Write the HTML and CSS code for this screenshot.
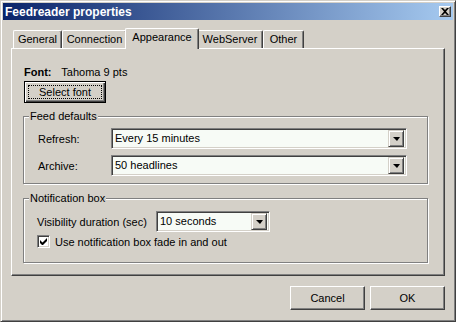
FILE: index.html
```html
<!DOCTYPE html>
<html lang="en">

<head>
    <meta charset="UTF-8">
    <title>Feedreader properties</title>
    <link rel="stylesheet" href="styles.css">
</head>

<body>
    <div class="window">
        <div class="titlebar">
            <span class="title">Feedreader properties</span>
            <span class="close">
                <svg width="8" height="7" viewBox="0 0 8 7"><path d="M0 0h2l2 2 2-2h2L5 3.5 8 7H6L4 5 2 7H0l3-3.5z" fill="#000"/></svg>
            </span>
        </div>

        <div class="content">
            <div class="tabs">
                <div class="tab t-general">General</div>
                <div class="tab t-connection">Connection</div>
                <div class="tab t-appearance active">Appearance</div>
                <div class="tab t-webserver">WebServer</div>
                <div class="tab t-other">Other</div>
            </div>

            <div class="panel">
                <div class="font-row">
                    <span class="font-label">Font:</span>
                    <span class="font-value">Tahoma 9 pts</span>
                </div>
                <button class="btn btn-default"><span class="focus">Select font</span></button>

                <fieldset class="group group-feed">
                    <legend>Feed defaults</legend>
                    <div class="row">
                        <span class="label">Refresh:</span>
                        <div class="combo combo-wide">
                            <span class="value">Every 15 minutes</span>
                            <span class="arrow"><i></i></span>
                        </div>
                    </div>
                    <div class="row">
                        <span class="label">Archive:</span>
                        <div class="combo combo-wide">
                            <span class="value">50 headlines</span>
                            <span class="arrow"><i></i></span>
                        </div>
                    </div>
                </fieldset>

                <fieldset class="group group-notify">
                    <legend>Notification box</legend>
                    <div class="row">
                        <span class="label label-long">Visibility duration (sec)</span>
                        <div class="combo combo-small">
                            <span class="value">10 seconds</span>
                            <span class="arrow"><i></i></span>
                        </div>
                    </div>
                    <div class="check-row">
                        <span class="checkbox">
                            <svg width="7" height="7" viewBox="0 0 7 7"><path d="M0 2v3l2 2h1l4-4V0L2.5 4.5z" fill="#000"/></svg>
                        </span>
                        <span>Use notification box fade in and out</span>
                    </div>
                </fieldset>
            </div>

            <div class="footer">
                <button class="btn btn-footer">Cancel</button>
                <button class="btn btn-footer">OK</button>
            </div>
        </div>
    </div>
</body>

</html>
```

FILE: styles.css
```css
* {
    box-sizing: border-box;
}

body {
    margin: 0;
    background-color: #d4d0c8;
    font-family: "Liberation Sans", Arial, sans-serif;
    font-size: 11px;
    color: #000;
}

.window {
    width: 456px;
    height: 322px;
    background-color: #d4d0c8;
    border-top: 1px solid #d4d0c8;
    border-left: 1px solid #d4d0c8;
    border-right: 1px solid #404040;
    border-bottom: 1px solid #404040;
    box-shadow: inset 1px 1px #fff, inset -1px -1px #808080;
    padding: 2px;
    display: flex;
    flex-direction: column;
}

.titlebar {
    height: 17px;
    background: linear-gradient(to right, #0a246a, #a6caf0);
    display: flex;
    align-items: center;
    justify-content: space-between;
    padding: 0 2px 0 2px;
}

.title {
    color: #fff;
    font-weight: bold;
    font-size: 12px;
}

.close {
    width: 12px;
    height: 11px;
    background-color: #d4d0c8;
    border-top: 1px solid #fff;
    border-left: 1px solid #fff;
    border-right: 1px solid #404040;
    border-bottom: 1px solid #404040;
    box-shadow: inset -1px -1px #808080;
    display: flex;
    align-items: center;
    justify-content: center;
    padding: 0 1px 1px 0;
}

.close svg {
    display: block;
}

.content {
    padding: 0 8px;
}

/* tab strip */
.tabs {
    display: flex;
    align-items: flex-end;
    height: 28px;
    padding-left: 2px;
}

.tab {
    height: 18px;
    line-height: 16px;
    text-align: center;
    border-top: 1px solid #fff;
    border-left: 1px solid #fff;
    border-right: 1px solid #404040;
    box-shadow: inset -1px 0 #808080;
    border-radius: 2px 2px 0 0;
    background-color: #d4d0c8;
    position: relative;
}

.t-general { width: 49px; }
.t-connection { width: 65px; }
.t-appearance { width: 72px; }
.t-webserver { width: 66px; }
.t-other { width: 41px; }

.tab.active {
    height: 21px;
    margin-bottom: -1px;
    line-height: 17px;
    margin-left: -2px;
    margin-right: -2px;
    width: 74px;
    z-index: 1;
}

.panel {
    height: 228px;
    border-top: 1px solid #fff;
    border-left: 1px solid #fff;
    border-right: 1px solid #404040;
    border-bottom: 1px solid #404040;
    box-shadow: inset -1px -1px #808080;
    padding: 17px 0 0 12px;
}

.font-row {
    height: 13px;
    line-height: 13px;
}

.font-label {
    font-weight: bold;
    margin-right: 7px;
}

/* buttons */
.btn {
    font-family: inherit;
    font-size: 11px;
    color: #000;
    background-color: #d4d0c8;
    border-top: 1px solid #fff;
    border-left: 1px solid #fff;
    border-right: 1px solid #404040;
    border-bottom: 1px solid #404040;
    box-shadow: inset -1px -1px #808080;
    padding: 0;
    margin: 0;
}

.btn-default {
    display: block;
    margin-top: 2px;
    width: 82px;
    height: 22px;
    border: 1px solid #000;
    box-shadow: inset 1px 1px #fff, inset -1px -1px #404040, inset -2px -2px #808080;
    padding: 3px;
}

.btn-default .focus {
    display: block;
    height: 14px;
    line-height: 12px;
    border: 1px dotted #000;
}

.btn-footer {
    width: 75px;
    height: 24px;
    margin-left: 5px;
}

.footer {
    display: flex;
    justify-content: flex-end;
    padding-top: 10px;
    padding-right: 0;
}

/* group boxes */
.group {
    margin: 7px 0 0 -1px;
    width: 405px;
    min-width: 0;
    border: 1px solid #808080;
    box-shadow: 1px 1px #fff, inset 1px 1px #fff;
    padding: 5px 20px 7px 14px;
}

.group legend {
    padding: 0 1px;
    margin-left: -9px;
    line-height: 13px;
    background-color: #d4d0c8;
}

.group-notify {
    margin-top: 8px;
    padding: 6px 20px 14px 13px;
}

.group-notify legend {
    margin-left: -8px;
}

.row {
    display: flex;
    align-items: center;
    height: 21px;
}

.row + .row {
    margin-top: 6px;
}

.label {
    width: 73px;
}

.label-long {
    width: 119px;
}

.combo {
    height: 21px;
    display: flex;
    align-items: center;
    background-color: #f7fbf6;
    border-top: 1px solid #808080;
    border-left: 1px solid #808080;
    border-right: 1px solid #fff;
    border-bottom: 1px solid #fff;
    box-shadow: inset 1px 1px #404040, inset -1px -1px #d4d0c8;
    padding: 2px;
}

.combo-wide {
    flex: 1;
}

.combo-small {
    width: 114px;
}

.combo .value {
    flex: 1;
    padding-left: 1px;
    line-height: 17px;
}

.arrow {
    width: 16px;
    height: 17px;
    background-color: #d4d0c8;
    border-top: 1px solid #d4d0c8;
    border-left: 1px solid #d4d0c8;
    border-right: 1px solid #404040;
    border-bottom: 1px solid #404040;
    box-shadow: inset 1px 1px #fff, inset -1px -1px #808080;
    display: flex;
    align-items: center;
    justify-content: center;
}

.arrow i {
    display: block;
    width: 0;
    height: 0;
    border-left: 4px solid transparent;
    border-right: 3px solid transparent;
    border-top: 4px solid #000;
    margin-top: 1px;
}

.check-row {
    display: flex;
    align-items: center;
    margin-top: 3px;
    height: 13px;
}

.checkbox {
    width: 13px;
    height: 13px;
    background-color: #fff;
    border-top: 1px solid #808080;
    border-left: 1px solid #808080;
    border-right: 1px solid #fff;
    border-bottom: 1px solid #fff;
    box-shadow: inset 1px 1px #404040, inset -1px -1px #d4d0c8;
    display: flex;
    align-items: center;
    justify-content: center;
    margin-right: 5px;
}
```
